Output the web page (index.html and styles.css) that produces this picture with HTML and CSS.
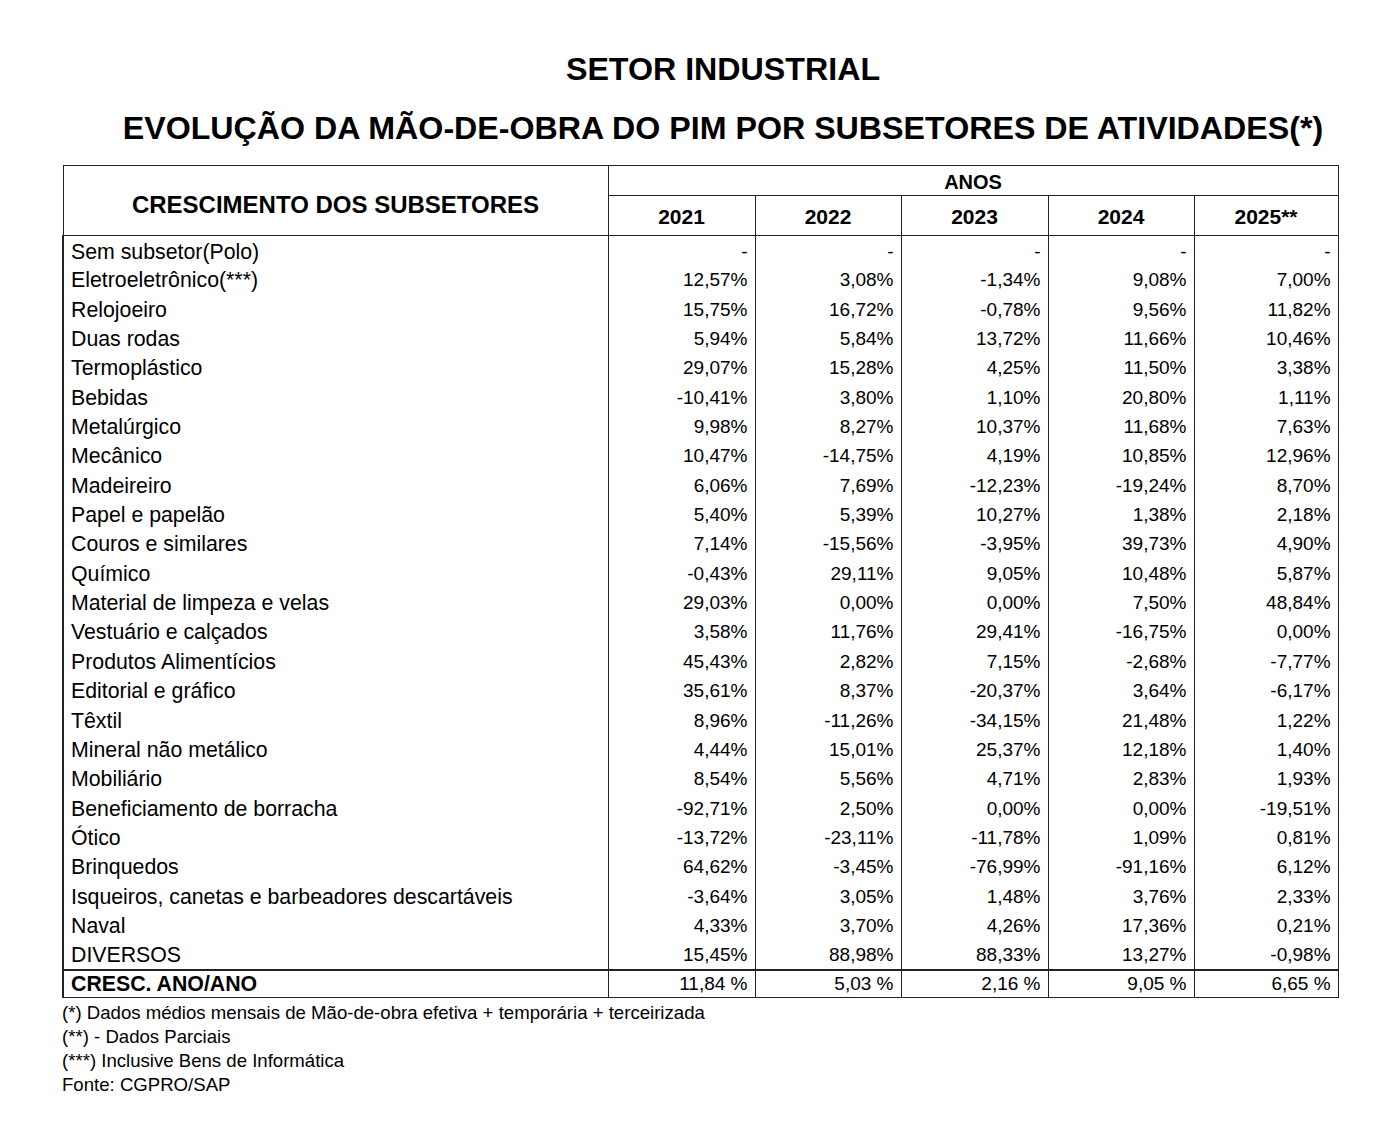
FILE: index.html
```html
<!DOCTYPE html>
<html lang="pt-BR">
<head>
<meta charset="utf-8">
<title>Setor Industrial</title>
<link rel="stylesheet" href="styles.css">
</head>
<body>
<div class="page">
  <header class="titles">
    <h1 class="title">SETOR INDUSTRIAL</h1>
    <h2 class="subtitle">EVOLUÇÃO DA MÃO-DE-OBRA DO PIM POR SUBSETORES DE ATIVIDADES(*)</h2>
  </header>
  <table class="data">
    <colgroup>
      <col class="c-name"><col class="c-y1"><col class="c-y2"><col class="c-y3"><col class="c-y4"><col class="c-y5">
    </colgroup>
    <thead>
      <tr class="h-anos">
        <th rowspan="2" class="h-name">CRESCIMENTO DOS SUBSETORES</th>
        <th colspan="5" class="h-group">ANOS</th>
      </tr>
      <tr class="h-years">
        <th>2021</th><th>2022</th><th>2023</th><th>2024</th><th>2025**</th>
      </tr>
    </thead>
    <tbody>
      <tr><td>Sem subsetor(Polo)</td><td>-</td><td>-</td><td>-</td><td>-</td><td>-</td></tr>
      <tr><td>Eletroeletrônico(***)</td><td>12,57%</td><td>3,08%</td><td>-1,34%</td><td>9,08%</td><td>7,00%</td></tr>
      <tr><td>Relojoeiro</td><td>15,75%</td><td>16,72%</td><td>-0,78%</td><td>9,56%</td><td>11,82%</td></tr>
      <tr><td>Duas rodas</td><td>5,94%</td><td>5,84%</td><td>13,72%</td><td>11,66%</td><td>10,46%</td></tr>
      <tr><td>Termoplástico</td><td>29,07%</td><td>15,28%</td><td>4,25%</td><td>11,50%</td><td>3,38%</td></tr>
      <tr><td>Bebidas</td><td>-10,41%</td><td>3,80%</td><td>1,10%</td><td>20,80%</td><td>1,11%</td></tr>
      <tr><td>Metalúrgico</td><td>9,98%</td><td>8,27%</td><td>10,37%</td><td>11,68%</td><td>7,63%</td></tr>
      <tr><td>Mecânico</td><td>10,47%</td><td>-14,75%</td><td>4,19%</td><td>10,85%</td><td>12,96%</td></tr>
      <tr><td>Madeireiro</td><td>6,06%</td><td>7,69%</td><td>-12,23%</td><td>-19,24%</td><td>8,70%</td></tr>
      <tr><td>Papel e papelão</td><td>5,40%</td><td>5,39%</td><td>10,27%</td><td>1,38%</td><td>2,18%</td></tr>
      <tr><td>Couros e similares</td><td>7,14%</td><td>-15,56%</td><td>-3,95%</td><td>39,73%</td><td>4,90%</td></tr>
      <tr><td>Químico</td><td>-0,43%</td><td>29,11%</td><td>9,05%</td><td>10,48%</td><td>5,87%</td></tr>
      <tr><td>Material de limpeza e velas</td><td>29,03%</td><td>0,00%</td><td>0,00%</td><td>7,50%</td><td>48,84%</td></tr>
      <tr><td>Vestuário e calçados</td><td>3,58%</td><td>11,76%</td><td>29,41%</td><td>-16,75%</td><td>0,00%</td></tr>
      <tr><td>Produtos Alimentícios</td><td>45,43%</td><td>2,82%</td><td>7,15%</td><td>-2,68%</td><td>-7,77%</td></tr>
      <tr><td>Editorial e gráfico</td><td>35,61%</td><td>8,37%</td><td>-20,37%</td><td>3,64%</td><td>-6,17%</td></tr>
      <tr><td>Têxtil</td><td>8,96%</td><td>-11,26%</td><td>-34,15%</td><td>21,48%</td><td>1,22%</td></tr>
      <tr><td>Mineral não metálico</td><td>4,44%</td><td>15,01%</td><td>25,37%</td><td>12,18%</td><td>1,40%</td></tr>
      <tr><td>Mobiliário</td><td>8,54%</td><td>5,56%</td><td>4,71%</td><td>2,83%</td><td>1,93%</td></tr>
      <tr><td>Beneficiamento de borracha</td><td>-92,71%</td><td>2,50%</td><td>0,00%</td><td>0,00%</td><td>-19,51%</td></tr>
      <tr><td>Ótico</td><td>-13,72%</td><td>-23,11%</td><td>-11,78%</td><td>1,09%</td><td>0,81%</td></tr>
      <tr><td>Brinquedos</td><td>64,62%</td><td>-3,45%</td><td>-76,99%</td><td>-91,16%</td><td>6,12%</td></tr>
      <tr><td>Isqueiros, canetas e barbeadores descartáveis</td><td>-3,64%</td><td>3,05%</td><td>1,48%</td><td>3,76%</td><td>2,33%</td></tr>
      <tr><td>Naval</td><td>4,33%</td><td>3,70%</td><td>4,26%</td><td>17,36%</td><td>0,21%</td></tr>
      <tr><td>DIVERSOS</td><td>15,45%</td><td>88,98%</td><td>88,33%</td><td>13,27%</td><td>-0,98%</td></tr>
    </tbody>
    <tfoot>
      <tr class="total"><td>CRESC. ANO/ANO</td><td>11,84 %</td><td>5,03 %</td><td>2,16 %</td><td>9,05 %</td><td>6,65 %</td></tr>
    </tfoot>
  </table>
  <div class="notes">
    <p>(*) Dados médios mensais de Mão-de-obra efetiva + temporária + terceirizada</p>
    <p>(**) - Dados Parciais</p>
    <p>(***) Inclusive Bens de Informática</p>
    <p>Fonte: CGPRO/SAP</p>
  </div>
</div>
</body>
</html>
```
FILE: styles.css
```css
html, body {
  margin: 0;
  padding: 0;
  background: #fff;
}
body {
  font-family: "Liberation Sans", Arial, sans-serif;
  color: #000;
}
.page {
  width: 1388px;
  padding: 0 0 0 62px;
  box-sizing: border-box;
}
.titles {
  margin-left: -4px;
  padding-top: 51px;
  text-align: center;
}
.title,
.subtitle {
  margin: 0;
  font-weight: bold;
  font-size: 32.2px;
  line-height: 36px;
}
.subtitle {
  margin-top: 23px;
}
.data {
  margin-top: 19px;
  width: 1275px;
  border-collapse: collapse;
  table-layout: fixed;
  font-size: 20px;
}
.c-name { width: 545px; }
.c-y1 { width: 147px; }
.c-y2 { width: 146px; }
.c-y3 { width: 147px; }
.c-y4 { width: 146px; }
.c-y5 { width: 144px; }

.data th {
  font-weight: bold;
  border: 1px solid #222;
  padding: 0;
  text-align: center;
}
.h-anos { height: 30px; }
.h-years { height: 40px; }
.h-name {
  font-size: 24px;
  padding-top: 8px !important;
  border-left-width: 2px;
}
.h-group {
  font-size: 20px;
  padding-top: 3px !important;
}
.h-years th {
  font-size: 21px;
  padding-top: 3px;
}
.data td {
  height: 29.36px;
  padding: 2px 7px 1px 0;
  box-sizing: border-box;
  text-align: right;
  border-left: 1px solid #222;
  border-right: 1px solid #222;
  white-space: nowrap;
  line-height: 24px;
  font-size: 19px;
}
.data td:first-child {
  text-align: left;
  padding-left: 7px;
  font-size: 21.3px;
  border-left: 2px solid #222;
}
.data tbody tr:first-child td {
  padding-top: 4px;
}
.total td {
  height: 28px;
  border-top: 2px solid #222;
  border-bottom: 1px solid #222;
  padding-top: 1px;
  padding-bottom: 0;
}
.total td:first-child {
  font-weight: bold;
}
.notes {
  margin-top: 3px;
  font-size: 18.6px;
}
.notes p {
  margin: 0;
  line-height: 24px;
}
```
